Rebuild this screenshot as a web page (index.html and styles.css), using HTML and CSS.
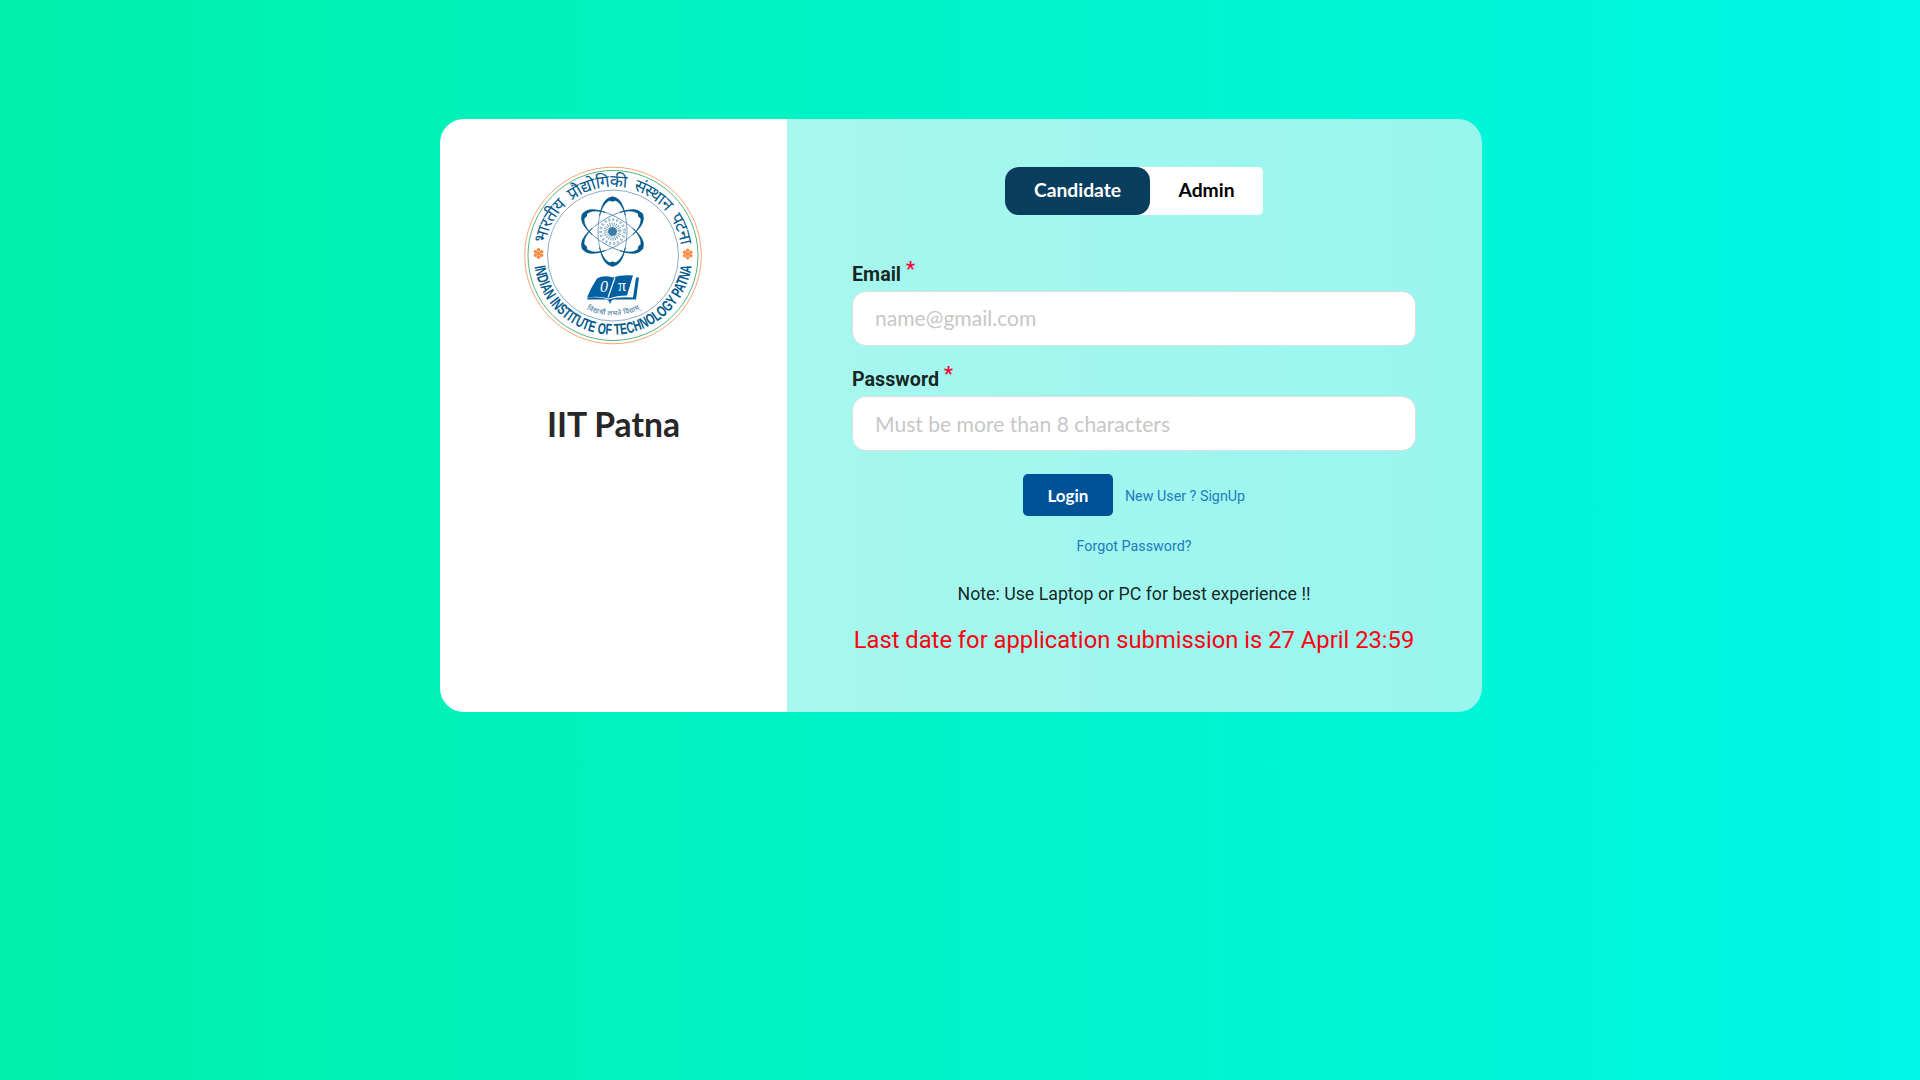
FILE: index.html
```html
<!DOCTYPE html>
<html lang="en">
<head>
<meta charset="utf-8">
<title>IIT Patna</title>
<link rel="stylesheet" href="styles.css">
</head>
<body>
<main class="card">
  <section class="brand">
    <svg class="logo" viewBox="0 0 178 178" role="img" aria-label="IIT Patna emblem">
      <defs>
        <path id="arc-top" d="M20.500 89a68.500 68.500 0 0 1 137 0"/>
        <path id="arc-bottom" d="M9.800 89a79.200 79.200 0 0 0 158.400 0"/>
        <path id="arc-motto" d="M29 89a60 60 0 0 0 120 0"/>
        <g id="orbit">
          <ellipse cx="88.500" cy="65" rx="14.500" ry="34"/>
          <path class="crescent" d="M75.500 49Q79 30.500 88.500 30.500T101.500 49Q97 33.500 88.500 33.500T75.500 49ZM75.500 81Q79 99.500 88.500 99.500T101.500 81Q97 96.500 88.500 96.500T75.500 81Z"/>
          <circle class="dot" cx="88.500" cy="32.500" r="2.600"/>
          <circle class="dot" cx="88.500" cy="97.500" r="2.600"/>
        </g>
      </defs>
      <circle class="ring-orange" cx="89" cy="89" r="88.300"/>
      <circle class="ring-green" cx="89" cy="89" r="85"/>
      <circle class="ring-blue" cx="89" cy="89" r="65.500"/>
      <text class="hindi"><textPath href="#arc-top" startOffset="11" textLength="193">भारतीय  प्रौद्योगिकी  संस्थान  पटना</textPath></text>
      <text class="english"><textPath href="#arc-bottom" startOffset="11" textLength="227" lengthAdjust="spacingAndGlyphs">INDIAN INSTITUTE OF TECHNOLOGY PATNA</textPath></text>
      <g class="atom">
        <use href="#orbit"/>
        <use href="#orbit" transform="rotate(60 88.500 65)"/>
        <use href="#orbit" transform="rotate(120 88.500 65)"/>
        <circle class="gear" cx="88.500" cy="65" r="12"/>
        <circle class="gear-inner" cx="88.500" cy="65" r="7"/>
        <circle class="core" cx="88.500" cy="65" r="4.500"/>
      </g>
      <path class="book" d="M73 112Q80 108 89 111Q97 108 109 109L103 129Q93 129 85 132Q75 129 63 131Q67 121 73 112Z"/>
      <path class="book" d="M112 111h3l-3 22H90q-3 0-4 5-1-5-4-5H63l1-2q12-1 21 2 8-3 24-2Z"/>
      <path class="fold" d="M91 111L84 131"/>
      <text class="glyph slant" x="76" y="125">0</text>
      <text class="glyph" x="94" y="124">π</text>
      <text class="motto"><textPath href="#arc-motto" startOffset="67" textLength="55">विद्यार्थी लभते विद्याम्</textPath></text>
      <g class="flower">
        <g id="flower">
          <circle cx="14.500" cy="83.300" r="1.800"/>
          <circle cx="14.500" cy="90.700" r="1.800"/>
          <circle cx="11.400" cy="85.300" r="1.800"/>
          <circle cx="17.600" cy="85.300" r="1.800"/>
          <circle cx="11.400" cy="88.700" r="1.800"/>
          <circle cx="17.600" cy="88.700" r="1.800"/>
          <circle cx="14.500" cy="87" r="2"/>
        </g>
        <use href="#flower" x="149.200" y=".5"/>
      </g>
    </svg>
    <h1 class="title">IIT Patna</h1>
  </section>
  <form class="panel">
    <div class="tabs">
      <button class="tab active" type="button">Candidate</button>
      <button class="tab" type="button">Admin</button>
    </div>
    <div class="field">
      <label class="label" for="email">Email <span class="required">*</span></label>
      <input class="input email" id="email" type="email" placeholder="name@gmail.com">
    </div>
    <div class="field">
      <label class="label" for="password">Password <span class="required">*</span></label>
      <input class="input" id="password" type="password" placeholder="Must be more than 8 characters">
    </div>
    <div class="actions">
      <button class="login" type="button">Login</button>
      <a class="link" href="#">New User ? SignUp</a>
    </div>
    <a class="link forgot" href="#">Forgot Password?</a>
    <p class="note">Note: Use Laptop or PC for best experience !!</p>
    <p class="deadline">Last date for application submission is 27 April 23:59</p>
  </form>
</main>
</body>
</html>
```
FILE: styles.css
```css
* { box-sizing: border-box; }
body {
  margin: 0;
  min-height: 100vh;
  padding-top: 119px;
  background: linear-gradient(to right, #00f1ab, #00f6e6);
  font-family: Roboto, "Liberation Sans", sans-serif;
  color: rgba(0, 0, 0, .87);
}
.card {
  display: flex;
  width: 1042px;
  height: 593px;
  margin: 0 0 0 440px;
  border-radius: 24px;
  overflow: hidden;
}
.brand {
  flex: none;
  width: 347px;
  background: #fff;
  display: flex;
  flex-direction: column;
  align-items: center;
  padding-top: 47px;
}
.logo { width: 178px; height: 179px; margin-right: 2px; }
.title {
  margin: 57px 0 0;
  font: 700 33.700px/44px Lato, sans-serif;
  color: #272727;
}
.panel {
  flex: 1;
  min-width: 0;
  background: linear-gradient(to right, #a7f7ee, #98f6ef);
  padding: 48px 66px 0 65px;
  display: flex;
  flex-direction: column;
  align-items: center;
}
.tabs {
  display: flex;
  height: 48px;
  margin-bottom: 43px;
  background: #fff;
  border-radius: 14px 5px 5px 14px;
}
.tab {
  width: 113px;
  border: 0;
  padding: 0 0 2px;
  background: none;
  color: #000;
  font: 700 19.300px/1 Lato, sans-serif;
}
.tab.active {
  width: 145px;
  background: #093e5e;
  color: #fff;
  border-radius: 14px;
}
.field {
  width: 564px;
  height: 105px;
}
.label {
  display: flex;
  height: 33px;
  align-items: center;
  font-size: 19.700px;
  font-weight: 700;
}
.required {
  margin: -10px 0 0 5px;
  color: #f50537;
}
.input {
  display: block;
  width: 100%;
  height: 55px;
  border: 1px solid #dedede;
  border-radius: 14px;
  padding: 0 22px;
  font: 400 21.100px/1 Lato, sans-serif;
}
.email { padding-bottom: 2px; }
.input::placeholder { color: #c7c7c7; }
.actions {
  display: flex;
  align-items: center;
  gap: 12px;
  height: 42px;
  margin-top: 6px;
}
.login {
  width: 90px;
  height: 42px;
  border: 0;
  border-radius: 5px;
  background: #005297;
  color: #fff;
  font: 700 17px/1 Lato, sans-serif;
}
.link {
  color: #1e7bc0;
  font-size: 14.300px;
  line-height: 20px;
  text-decoration: none;
}
.actions .link { padding-top: 2px; }
.forgot { margin-top: 20px; }
.note { margin: 24px 0 0; font-size: 17.750px; line-height: 28px; }
.deadline {
  margin: 17px 0 0;
  color: #ff0010;
  font-size: 23.750px;
  line-height: 30px;
  white-space: nowrap;
}
.ring-orange, .ring-green, .ring-blue { fill: none; }
.ring-orange { stroke: #f8a66c; stroke-width: 1; }
.ring-green { stroke: #3bac76; stroke-width: .9; }
.ring-blue { stroke: #6b98b9; stroke-width: .8; }
.hindi, .english { fill: #035a8c; }
.hindi { font-family: "Noto Sans", "Noto Sans Devanagari", sans-serif; font-size: 17px; white-space: pre; }
.english { font-family: "Liberation Sans", sans-serif; font-size: 15.500px; font-weight: 700; }
.motto { fill: #356f96; font-family: "Noto Sans", "Noto Sans Devanagari", sans-serif; font-size: 7px; }
.atom { fill: none; stroke: #3c7da5; stroke-width: .7; }
.crescent { fill: #035a8c; stroke: #035a8c; stroke-width: .5; }
.dot { fill: #035a8c; stroke: none; }
.gear { stroke: #9dbdd1; stroke-width: 3; stroke-dasharray: 2 2; }
.gear-inner { stroke: #6998b5; stroke-width: 4; stroke-dasharray: .8 1.200; }
.core { fill: #3c7da5; stroke: none; }
.book { fill: #0260a0; }
.fold { stroke: #fff; stroke-width: 1.200; }
.glyph { fill: #fff; font: 16px "Liberation Serif", serif; }
.slant { font-style: italic; }
.flower { fill: #f98b42; }
```
